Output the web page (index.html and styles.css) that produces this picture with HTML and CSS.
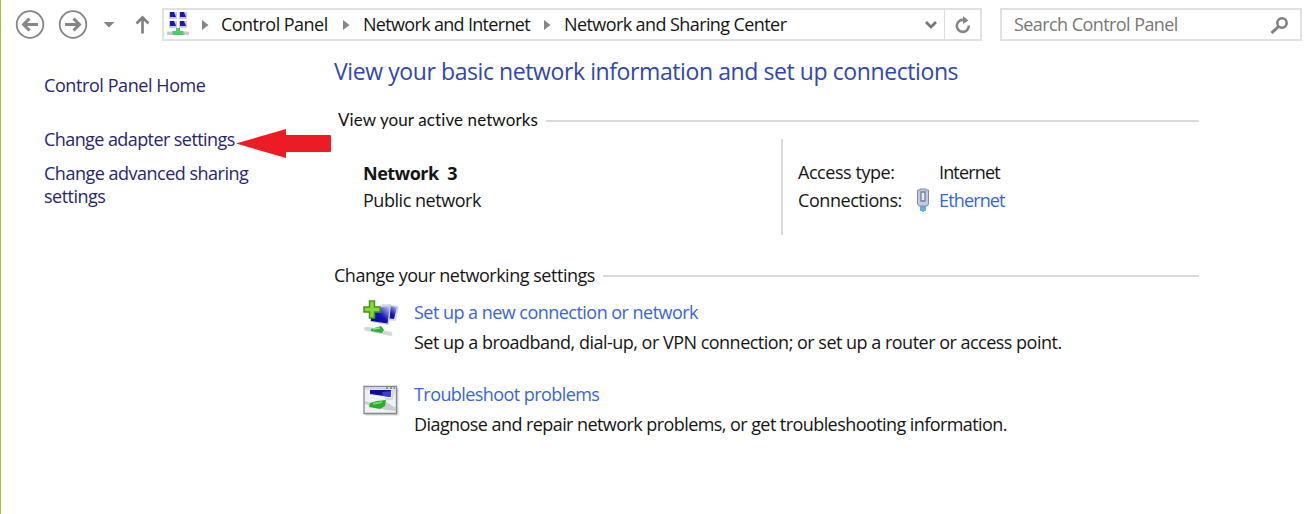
FILE: index.html
```html
<!DOCTYPE html>
<html lang="en">
<head>
<meta charset="utf-8">
<title>Network and Sharing Center</title>
<link rel="stylesheet" href="styles.css">
</head>
<body>
<div class="window">
  <header class="toolbar">
    <svg class="nav-icons" width="133" height="34" viewBox="0 0 133 34" fill="none" stroke="#858585">
      <circle cx="29" cy="16.5" r="13.3" stroke-width="1.8"/>
      <path d="M37 16.5H22.5M28.500 10.500L22.500 16.500L28.500 22.500" stroke-width="3"/>
      <circle cx="72" cy="16.5" r="13.3" stroke-width="1.8"/>
      <path d="M64 16.5H78.5M72.500 10.500L78.500 16.500L72.500 22.500" stroke-width="3"/>
      <path d="M102.500 14H113.500L108 19.500Z" fill="#858585" stroke="none"/>
    </svg>
    <svg class="up" width="28" height="34" viewBox="0 0 28 34" fill="none" stroke="#808080" stroke-width="2.7">
      <path d="M8.500 25.500V10M2.500 15.500L8.500 9.500L14.500 15.500"/>
    </svg>
    <div class="address">
      <svg class="net-icon" width="24" height="26" viewBox="0 0 24 26">
        <g fill="#c9c9e6"><path d="M2 1H10V8H2ZM12 1H20V8H12ZM2 10H10V17H2ZM12 10H20V17H12Z"/></g>
        <g fill="#1a18b5"><path d="M3 1H7L9 6H3ZM13 1H17L19 6H13ZM3 10H7L9 15H3ZM13 10H17L19 15H13Z"/></g>
        <path d="M0 20.500H22V24H0Z" fill="#c7cacb"/>
        <path d="M9 17H13V20H16.500V24H5.500V20H9Z" fill="#4fc870"/>
      </svg>
      <svg class="tri first" width="7" height="10" viewBox="0 0 7 10"><path d="M0 0L6.500 5L0 10Z"/></svg>
      <span class="crumb c1">Control Panel</span>
      <svg class="tri" width="7" height="10" viewBox="0 0 7 10"><path d="M0 0L6.500 5L0 10Z"/></svg>
      <span class="crumb c2">Network and Internet</span>
      <svg class="tri" width="7" height="10" viewBox="0 0 7 10"><path d="M0 0L6.500 5L0 10Z"/></svg>
      <span class="crumb c3">Network and Sharing Center</span>
      <svg class="chevron" width="12" height="9" viewBox="0 0 12 9" fill="none" stroke="#777" stroke-width="2.8"><path d="M1 2L6 7L11 2"/></svg>
      <div class="refresh">
        <svg width="18" height="18" viewBox="0 0 18 18"><path d="M10 4A6 6 0 1 0 14.800 9.500" fill="none" stroke="#858585" stroke-width="2.6"/><path d="M9 0L14.500 4.500L9 8Z" fill="#858585"/></svg>
      </div>
    </div>
    <div class="search">
      <span>Search Control Panel</span>
      <svg width="18" height="18" viewBox="0 0 18 18" fill="none" stroke="#808080"><circle cx="12" cy="7" r="4.7" stroke-width="2.5"/><path d="M8.500 10.500L1.500 17" stroke-width="3"/></svg>
    </div>
  </header>
  <div class="body">
    <nav class="sidebar">
      <a class="home">Control Panel Home</a>
      <div class="adapter">
        <a>Change adapter settings</a>
        <svg class="pointer" width="96" height="30" viewBox="0 0 96 30"><path d="M0 14.500L50 0V6H94Q95 6 95 7V22Q95 23 94 23H50V29Z" fill="#ed1c24"/></svg>
      </div>
      <a class="advanced">Change advanced sharing<br><span>settings</span></a>
    </nav>
    <main class="content">
      <h1>View your basic network information and set up connections</h1>
      <div class="heading active"><span>View your active networks</span></div>
      <section class="network">
        <div class="identity"><strong>Network&nbsp; 3</strong><span>Public network</span></div>
        <div class="details">
          <span class="access">Access type:</span><span></span><span class="internet">Internet</span>
          <span class="conns">Connections:</span>
          <svg width="14" height="25" viewBox="0 0 14 25"><path d="M5 18V23M7 18V24M9 18V23" stroke="#3f9ed0" stroke-width="1.6"/><path d="M4 1H10V2H12.500V16L11 18H3L1.500 16V2H4Z" fill="#bdcbe4" stroke="#858ba3"/><path d="M5 4H9V13H5Z" fill="#e8ecf3" stroke="#777e97" stroke-width="1.3"/></svg>
          <a class="ethernet">Ethernet</a>
        </div>
      </section>
      <div class="heading change"><span>Change your networking settings</span></div>
      <div class="task">
        <svg width="38" height="38" viewBox="0 0 38 38">
          <defs>
            <linearGradient id="screen" x1="0" y1="1" x2="1" y2="0"><stop offset="0" stop-color="#050591"/><stop offset=".5" stop-color="#1414b8"/><stop offset="1" stop-color="#d0d8fc"/></linearGradient>
          </defs>
          <path d="M19 4L36 6L33 21L22 20Z" fill="#d9dce6"/><path d="M20 5L34 7L31 19L22 18Z" fill="url(#screen)"/>
          <path d="M7 7L28 4L26 25L7 22Z" fill="#d2d5de"/><path d="M8 9L27 6L24.500 23.500L8 21Z" fill="url(#screen)"/>
          <path d="M1 28Q2 26 6 27L28 32Q31 34 28 36L4 31Q1 31 1 28Z" fill="#d4d8d9"/>
          <path d="M8 29L18 26L21 30L19 33L8 31Z" fill="#35ab39"/><path d="M10 29L17 28" stroke="#8fe787" stroke-width="1.5"/>
          <path d="M6.500 1H11.500V7H17V12H11.500V18H6.500V12H1V7H6.500Z" fill="#8bd53c" stroke="#409719" stroke-width="1.5"/>
        </svg>
        <div><a class="setup">Set up a new connection or network</a><p class="setup-text">Set up a broadband, dial-up, or VPN connection; or set up a router or access point.</p></div>
      </div>
      <div class="task trouble">
        <svg width="38" height="38" viewBox="0 0 38 38">
          <path d="M2 32.500H34.500V6" fill="none" stroke="#d5d5d5" stroke-width="2"/><path d="M1 4.500H33.500V31.500H1Z" fill="#f0f1f2" stroke="#858990" stroke-width="1.3"/><path d="M2 5H33V7.500H2Z" fill="#d5d8da"/><path d="M23 6H25M27 6H29M30.500 6H32" stroke="#747c8b" stroke-width="1.5"/>
          <path d="M7 8H28L27.500 15L7 12Z" fill="#0d0d9d"/><path d="M19 10L28 9L27.500 15L20 14Z" fill="#3a3ed0"/><path d="M28 9H31L29 17H22" fill="none" stroke="#d1d8ec" stroke-width="2"/>
          <path d="M2 19L8 21L23 20L33 26V29L23 28L2 22Z" fill="#c9cfd0"/><path d="M7 21L14 19L23 18L22 24L17 27L6 25Z" fill="#28af29"/><path d="M10 22L19 20" stroke="#73d76c" stroke-width="2"/>
        </svg>
        <div><a class="shoot">Troubleshoot problems</a><p class="shoot-text">Diagnose and repair network problems, or get troubleshooting information.</p></div>
      </div>
    </main>
  </div>
</div>
</body>
</html>
```
FILE: styles.css
```css
* { box-sizing: border-box; }
body { margin: 0; background: #fff; color: #151515; font: 18px/24px "Open Sans", "Noto Sans", sans-serif; letter-spacing: -.53px; }
.window { height: 514px; border-left: 1px solid #a4bd3d; overflow: hidden; }
.toolbar { height: 41px; padding-top: 8px; display: flex; }
.nav-icons, .up { flex: none; }
.address { width: 820px; height: 33px; border: 2px solid #e1e1e1; display: flex; align-items: center; flex: none; white-space: nowrap; }
.net-icon { flex: none; margin: 0 0 2px 3px; }
.tri { flex: none; fill: #858585; margin: 0 13px 0 15px; }
.tri.first { margin: 0 12px 0 11px; }
.crumb { flex: none; line-height: 24px; padding-bottom: 1px; }
.c1 { width: 107px; }
.c2 { width: 166px; letter-spacing: -.68px; }
.c3 { width: 223px; letter-spacing: -.59px; }
.chevron { margin-left: auto; margin-right: 7px; flex: none; }
.refresh { width: 36px; height: 29px; border-left: 1px solid #ddd; display: grid; place-items: center; flex: none; }
.search { width: 302px; height: 33px; border: 2px solid #e1e1e1; margin-left: 18px; padding: 0 12px; display: flex; align-items: center; justify-content: space-between; color: #777; letter-spacing: -.57px; flex: none; }
.search span { padding-bottom: 1px; }
.body { display: flex; }
.sidebar { width: 333px; padding: 32px 0 0 43px; color: #28266f; flex: none; }
.home { display: block; letter-spacing: -.42px; }
.adapter { display: flex; align-items: center; margin-top: 30px; height: 24px; white-space: nowrap; }
.adapter a { width: 192px; flex: none; letter-spacing: -.58px; }
.pointer { flex: none; margin-top: 10px; }
.advanced { display: block; margin-top: 11px; line-height: 22.5px; letter-spacing: -.5px; }
.content { width: 865px; }
h1 { margin: 14px 0 0; font-size: 23px; line-height: 32px; font-weight: 400; color: #3046b3; letter-spacing: -.41px; white-space: nowrap; }
.heading { display: flex; align-items: center; gap: 8px; white-space: nowrap; letter-spacing: -.47px; }
.heading::after { content: ""; height: 2px; flex: 1; background: #d8dada; margin-top: 2px; }
.active { margin: 21px 0 0 4px; font: 17px/24px Lato, sans-serif; letter-spacing: .1px; color: #111; }
.network { height: 96px; margin-top: 7px; display: flex; }
.identity { width: 447px; padding: 22px 0 0 29px; display: flex; flex-direction: column; gap: 3px; letter-spacing: -.46px; }
.details { border-left: 2px solid #d8dada; padding: 19px 0 0 15px; display: grid; grid-template-columns: 118px 23px 100px; grid-template-rows: 28px 28px; align-content: start; align-items: center; white-space: nowrap; letter-spacing: -.44px; }
.internet, .ethernet { letter-spacing: -.85px; }
.content a { color: #3765dc; }
.change { margin-top: 28px; }
.task { display: flex; padding-left: 29px; margin-top: 13px; white-space: nowrap; }
.task svg { flex: none; margin-right: 13px; }
.task a { display: block; }
.task p { margin: 6px 0 0; }
.setup-text { letter-spacing: -.51px; }
.shoot, .shoot-text { letter-spacing: -.57px; }
.trouble { margin-top: 28px; }
```
